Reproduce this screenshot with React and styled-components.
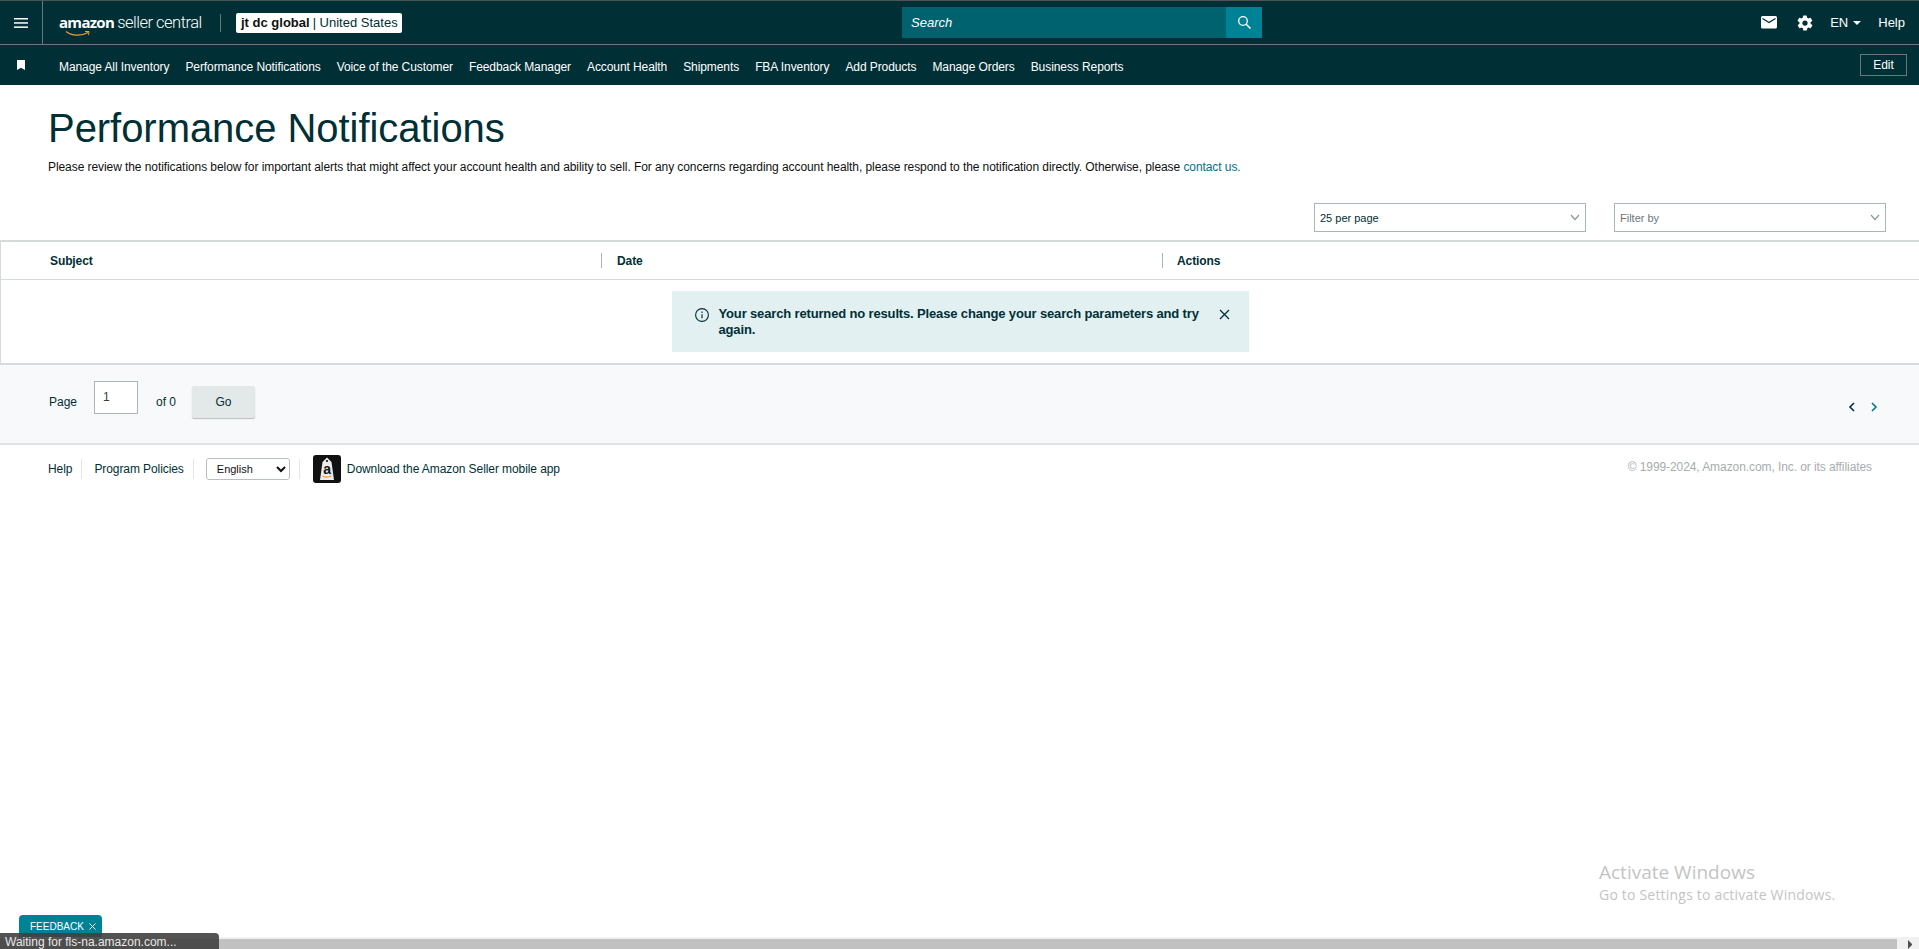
import React from 'react';
import styled, { createGlobalStyle } from 'styled-components';

const Global = createGlobalStyle`
	html, body {
		margin: 0;
		height: 100%;
		overflow: hidden;
		background: #fff;
		font-family: "Liberation Sans", Arial, sans-serif;
		color: #002f36;
	}
	* { box-sizing: border-box; }
`;

const Page = styled.div`
	position: relative;
	width: 1919px;
	height: 949px;
	overflow: hidden;
	background: #fff;
`;

const TopBar = styled.header`
	display: flex;
	align-items: center;
	height: 45px;
	background: #002f36;
	border-top: 1px solid #4b5556;
	border-bottom: 1px solid #6c7778;
	color: #fff;
`;

const MenuButton = styled.div`
	display: flex;
	align-items: center;
	justify-content: center;
	width: 43px;
	height: 100%;
	border-right: 1px solid #6c7778;
`;

const Logo = styled.div`
	position: relative;
	display: flex;
	align-items: baseline;
	margin-left: 16px;
	width: 145px;
	margin-top: -2px;
	white-space: nowrap;
	color: #fff;
`;

const LogoBold = styled.span`
	font-family: "Open Sans", sans-serif;
	font-size: 15px;
	font-weight: 700;
	letter-spacing: -0.7px;
`;

const LogoLight = styled.span`
	font-family: Roboto, sans-serif;
	font-size: 16.5px;
	font-weight: 300;
	margin-left: 3px;
	letter-spacing: -0.5px;
`;

const LogoSmile = styled.svg`
	position: absolute;
	left: 6px;
	top: 18px;
`;

const LogoDivider = styled.div`
	width: 1px;
	height: 18px;
	margin-left: 16px;
	margin-right: 15px;
	background: #6c7778;
	flex: none;
`;

const AccountPill = styled.div`
	display: flex;
	align-items: center;
	height: 20px;
	padding: 0 4px 0 5px;
	background: #fff;
	border-radius: 2px;
	color: #002f36;
	font-size: 13px;
	white-space: nowrap;
`;

const AccountName = styled.b`
	font-weight: 700;
	color: #0f1111;
	margin-right: 3px;
`;

const SearchWrap = styled.div`
	display: flex;
	position: absolute;
	left: 902px;
	top: 7px;
	width: 360px;
	height: 31px;
`;

const SearchField = styled.div`
	flex: 1;
	display: flex;
	align-items: center;
	padding-left: 9px;
	background: #00626f;
	color: #fff;
	font-size: 13px;
	font-style: italic;
`;

const SearchButton = styled.div`
	display: flex;
	align-items: center;
	justify-content: center;
	width: 36px;
	background: #008296;
`;

const TopRight = styled.div`
	display: flex;
	align-items: center;
	margin-left: auto;
	padding-right: 14px;
	font-size: 13px;
`;

const IconSlot = styled.div`
	display: flex;
	align-items: center;
	margin-right: ${(p) => p.$gap}px;
`;

const Caret = styled.span`
	display: inline-block;
	margin-left: 5px;
	margin-right: 17px;
	margin-top: 1px;
	border-left: 4px solid transparent;
	border-right: 4px solid transparent;
	border-top: 4px solid #fff;
`;

const NavBar = styled.nav`
	display: flex;
	align-items: center;
	height: 40px;
	padding-left: 17px;
	background: #002f36;
	color: #fff;
	font-size: 12px;
`;

const NavList = styled.div`
	display: flex;
	gap: 16px;
	margin-left: 34px;
	padding-top: 3px;
	letter-spacing: -0.085px;
	white-space: nowrap;
`;

const EditButton = styled.div`
	display: flex;
	align-items: center;
	justify-content: center;
	margin-left: auto;
	margin-right: 12px;
	width: 47px;
	height: 22px;
	border: 1px solid #6c7778;
	font-size: 12px;
`;

const Head = styled.section`
	padding: 20px 48px 0;
`;

const Title = styled.h1`
	margin: 0;
	font-size: 40px;
	line-height: 46px;
	font-weight: 400;
	letter-spacing: -0.05px;
	color: #002f36;
`;

const Intro = styled.p`
	margin: 8px 0 0;
	font-size: 12px;
	line-height: 16px;
	letter-spacing: -0.075px;
	color: #0f1111;
`;

const Link = styled.span`
	color: #00727f;
`;

const Controls = styled.div`
	display: flex;
	justify-content: flex-end;
	gap: 28px;
	padding: 28px 33px 8px 0;
`;

const SelectBox = styled.div`
	display: flex;
	align-items: center;
	justify-content: space-between;
	width: 272px;
	height: 29px;
	padding: 0 5px;
	border: 1px solid #a6b6b9;
	font-size: 11px;
	color: ${(p) => (p.$muted ? '#6c7778' : '#002f36')};
	background: #fff;
`;

const Table = styled.div`
	border: 1px solid #d5dbdb;
	border-top-width: 2px;
	border-bottom-width: 2px;
	border-right: none;
`;

const TableHead = styled.div`
	display: grid;
	grid-template-columns: 600px 561px 1fr;
	align-items: center;
	height: 38px;
	border-bottom: 1px solid #d5dbdb;
	font-size: 12px;
	font-weight: 700;
	letter-spacing: -0.1px;
`;

const HeadCell = styled.div`
	display: flex;
	align-items: center;
	height: 15px;
	padding-left: ${(p) => p.$pad}px;
	border-left: ${(p) => (p.$rule ? '1px solid #a6b6b9' : 'none')};
`;

const TableBody = styled.div`
	display: flex;
	justify-content: center;
	padding: 11px 0;
`;

const Notice = styled.div`
	display: flex;
	align-items: flex-start;
	width: 577px;
	height: 61px;
	padding: 15px 19px 0 24px;
	background: #e3f0f1;
	color: #002f36;
	font-size: 13px;
	font-weight: 700;
	line-height: 16px;
	letter-spacing: -0.15px;
`;

const NoticeText = styled.div`
	flex: 1;
	padding: 0 15px 0 0;
`;

const NoticeIcon = styled.svg`
	flex: none;
	margin: 1px 9px 0 -2px;
`;

const CloseIcon = styled.svg`
	flex: none;
	margin-top: 3px;
`;

const Pager = styled.div`
	display: flex;
	align-items: center;
	height: 80px;
	padding-left: 49px;
	padding-bottom: 5px;
	background: #f8f9fa;
	border-bottom: 2px solid #e0e3e6;
	font-size: 12px;
`;

const PageInput = styled.div`
	width: 44px;
	height: 33px;
	margin: -9px 18px 0 17px;
	padding: 8px 0 0 8px;
	background: #fff;
	border: 1px solid #a6b6b9;
	color: #3b3b3b;
`;

const GoButton = styled.div`
	display: flex;
	align-items: center;
	justify-content: center;
	width: 63px;
	height: 32px;
	margin-left: 16px;
	background: #e3e9e9;
	border-radius: 2px;
	box-shadow: 0 1px 1px rgba(0, 0, 0, 0.25);
`;

const PagerArrows = styled.div`
	display: flex;
	align-items: center;
	gap: 14px;
	margin-left: auto;
	margin-right: 41px;
	margin-top: 10px;
`;

const Footer = styled.footer`
	display: flex;
	align-items: center;
	padding: 10px 47px 0 48px;
	font-size: 12px;
	letter-spacing: -0.08px;
	color: #002f36;
`;

const FooterItem = styled.div`
	display: flex;
	align-items: center;
	height: 20px;
	padding-right: ${(p) => p.$right}px;
	margin-right: ${(p) => p.$after}px;
	border-right: 1px solid #e3e6e6;
`;

const LangSelect = styled.select`
	width: 84px;
	height: 22px;
	padding-left: 6px;
	background: #fff;
	border: 1px solid #b8bfbf;
	border-radius: 3px;
	font-family: "Liberation Sans", sans-serif;
	font-size: 11px;
	color: #0f1111;
`;

const AppIcon = styled.svg`
	margin-right: 6px;
	margin-left: 1px;
`;

const Copyright = styled.div`
	margin-left: auto;
	margin-top: -4px;
	font-size: 12px;
	color: #a7adad;
`;

const Watermark = styled.div`
	position: absolute;
	left: 1599px;
	top: 860px;
	font-family: "Open Sans", sans-serif;
	color: #c4c4c4;
`;

const WatermarkTitle = styled.div`
	font-size: 19px;
	line-height: 24px;
`;

const WatermarkLine = styled.div`
	font-size: 14px;
	line-height: 21px;
	letter-spacing: 0.2px;
`;

const FeedbackTab = styled.div`
	position: absolute;
	left: 19px;
	top: 915px;
	display: flex;
	align-items: center;
	gap: 5px;
	width: 83px;
	height: 22px;
	padding: 1px 0 0 11px;
	background: #008296;
	border-radius: 4px 4px 0 0;
	color: #fff;
	font-size: 10px;
`;

const ScrollBar = styled.div`
	position: absolute;
	left: 0;
	right: 0;
	top: 937px;
	height: 12px;
	display: flex;
	background: #f1f1f1;
`;

const ScrollThumb = styled.div`
	width: 1897px;
	margin-top: 2px;
	background: #c1c1c1;
`;

const ScrollArrow = styled.div`
	margin: 3px 0 0 11px;
	border-top: 4px solid transparent;
	border-bottom: 4px solid transparent;
	border-left: 4px solid #505050;
`;

const StatusBubble = styled.div`
	position: absolute;
	left: 0;
	top: 933px;
	width: 219px;
	height: 16px;
	padding: 2px 0 0 5px;
	background: rgba(64, 64, 64, 0.9);
	border-top-right-radius: 4px;
	color: #e8e8e8;
	font-family: "Liberation Sans", sans-serif;
	font-size: 12px;
	line-height: 14px;
	white-space: nowrap;
`;

const navItems = [
	'Manage All Inventory',
	'Performance Notifications',
	'Voice of the Customer',
	'Feedback Manager',
	'Account Health',
	'Shipments',
	'FBA Inventory',
	'Add Products',
	'Manage Orders',
	'Business Reports',
];

const Chevron = () => (
	<svg width="10" height="7" viewBox="0 0 10 7" fill="none">
		<path d="M1 1 5 5.5 9 1" stroke="#8a9899" strokeWidth="1.2" />
	</svg>
);

export default function App() {
	return (
		<Page>
			<Global />
			<TopBar>
				<MenuButton>
					<svg width="14" height="12" viewBox="0 0 14 12" fill="#fff">
						<rect y="1" width="14" height="1.5" />
						<rect y="5.2" width="14" height="1.5" />
						<rect y="9.4" width="14" height="1.5" />
					</svg>
				</MenuButton>
				<Logo>
					<LogoBold>amazon</LogoBold>
					<LogoLight>seller central</LogoLight>
					<LogoSmile width="26" height="8" viewBox="0 0 26 8" fill="none">
						<path d="M1 1.5C7 6 16 6.5 23 2.5" stroke="#f79c34" strokeWidth="1.3" />
						<path d="M20 1.5 24 1.5 23.5 5" stroke="#f79c34" strokeWidth="1" />
					</LogoSmile>
				</Logo>
				<LogoDivider />
				<AccountPill>
					<AccountName>jt dc global</AccountName>
					<span>|&nbsp;United States</span>
				</AccountPill>
				<SearchWrap>
					<SearchField>Search</SearchField>
					<SearchButton>
						<svg width="15" height="15" viewBox="0 0 15 15" fill="none" stroke="#fff">
							<circle cx="6" cy="6" r="4.3" strokeWidth="1.3" />
							<path d="M9.2 9.2 13.5 13.5" strokeWidth="1.6" />
						</svg>
					</SearchButton>
				</SearchWrap>
				<TopRight>
					<IconSlot $gap={19}>
						<svg width="16" height="13" viewBox="0 0 16 13">
							<rect width="16" height="12.5" rx="1.5" fill="#fff" />
							<path d="M1.5 2.5 8 6.5 14.5 2.5" fill="none" stroke="#002f36" strokeWidth="1.4" />
						</svg>
					</IconSlot>
					<IconSlot $gap={16}>
						<svg width="18" height="18" viewBox="0 0 24 24" fill="#fff">
							<path d="M19.4 13a7.6 7.6 0 0 0 0-2l2.1-1.6a.5.5 0 0 0 .1-.6l-2-3.5a.5.5 0 0 0-.6-.2l-2.5 1a7.3 7.3 0 0 0-1.7-1l-.4-2.6a.5.5 0 0 0-.5-.4h-4a.5.5 0 0 0-.5.4l-.4 2.6a7.7 7.7 0 0 0-1.7 1l-2.5-1a.5.5 0 0 0-.6.2l-2 3.5a.5.5 0 0 0 .1.6L4.6 11a7.6 7.6 0 0 0 0 2l-2.1 1.6a.5.5 0 0 0-.1.6l2 3.5c.1.2.4.3.6.2l2.5-1c.5.4 1.1.7 1.7 1l.4 2.6c0 .2.3.4.5.4h4c.2 0 .5-.2.5-.4l.4-2.6c.6-.3 1.2-.6 1.7-1l2.5 1c.2.1.5 0 .6-.2l2-3.5a.5.5 0 0 0-.1-.6ZM12 15.5a3.5 3.5 0 1 1 0-7 3.5 3.5 0 0 1 0 7Z" />
						</svg>
					</IconSlot>
					<span>EN</span>
					<Caret />
					<span>Help</span>
				</TopRight>
			</TopBar>
			<NavBar>
				<svg width="8" height="10" viewBox="0 0 8 10" fill="#fff">
					<path d="M0 0h8v10L4 7.8 0 10Z" />
				</svg>
				<NavList>
					{navItems.map((item) => (
						<span key={item}>{item}</span>
					))}
				</NavList>
				<EditButton>Edit</EditButton>
			</NavBar>
			<Head>
				<Title>Performance Notifications</Title>
				<Intro>
					Please review the notifications below for important alerts that might affect your account health and ability to sell. For any concerns regarding account health, please respond to the notification directly. Otherwise, please <Link>contact us.</Link>
				</Intro>
			</Head>
			<Controls>
				<SelectBox>
					<span>25 per page</span>
					<Chevron />
				</SelectBox>
				<SelectBox $muted>
					<span>Filter by</span>
					<Chevron />
				</SelectBox>
			</Controls>
			<Table>
				<TableHead>
					<HeadCell $pad={49}>Subject</HeadCell>
					<HeadCell $rule $pad={15}>Date</HeadCell>
					<HeadCell $rule $pad={14}>Actions</HeadCell>
				</TableHead>
				<TableBody>
					<Notice>
						<NoticeIcon width="16" height="16" viewBox="0 0 16 16" fill="none" stroke="#002f36">
							<circle cx="8" cy="8" r="6.4" strokeWidth="1.1" />
							<path d="M8 7.2v4" strokeWidth="1.2" />
							<path d="M8 4.6v1.3" strokeWidth="1.2" />
						</NoticeIcon>
						<NoticeText>Your search returned no results. Please change your search parameters and try again.</NoticeText>
						<CloseIcon width="11" height="11" viewBox="0 0 11 11" fill="none" stroke="#002f36" strokeWidth="1.3">
							<path d="M1 1 10 10M10 1 1 10" />
						</CloseIcon>
					</Notice>
				</TableBody>
			</Table>
			<Pager>
				<span>Page</span>
				<PageInput>1</PageInput>
				<span>of 0</span>
				<GoButton>Go</GoButton>
				<PagerArrows>
					<svg width="8" height="10" viewBox="0 0 8 10" fill="none" stroke="#002f36" strokeWidth="1.6">
						<path d="M6 1 2 5 6 9" />
					</svg>
					<svg width="8" height="10" viewBox="0 0 8 10" fill="none" stroke="#00788a" strokeWidth="1.6">
						<path d="M2 1 6 5 2 9" />
					</svg>
				</PagerArrows>
			</Pager>
			<Footer>
				<FooterItem $right={9} $after={12}>Help</FooterItem>
				<FooterItem $right={9} $after={12}>Program Policies</FooterItem>
				<FooterItem $right={9} $after={12}>
					<LangSelect defaultValue="English">
						<option>English</option>
					</LangSelect>
				</FooterItem>
				<AppIcon width="28" height="28" viewBox="0 0 28 28">
					<rect width="28" height="28" rx="3" fill="#111" />
					<path d="M9.5 7 14 2.5 18.5 7 21 25 7 25Z" fill="#ececec" />
					<circle cx="14" cy="6" r="1.1" fill="#111" />
					<text x="14" y="18.5" textAnchor="middle" fontFamily="Liberation Sans, sans-serif" fontSize="14" fontWeight="700" fill="#111">a</text>
					<path d="M9.5 21C12 22.6 16 22.6 18.5 20.6" fill="none" stroke="#f79c34" strokeWidth="1.1" />
				</AppIcon>
				<span>Download the Amazon Seller mobile app</span>
				<Copyright>© 1999-2024, Amazon.com, Inc. or its affiliates</Copyright>
			</Footer>
			<Watermark>
				<WatermarkTitle>Activate Windows</WatermarkTitle>
				<WatermarkLine>Go to Settings to activate Windows.</WatermarkLine>
			</Watermark>
			<ScrollBar>
				<ScrollThumb />
				<ScrollArrow />
			</ScrollBar>
			<FeedbackTab>
				<span>FEEDBACK</span>
				<svg width="7" height="7" viewBox="0 0 7 7" fill="none" stroke="#fff" strokeWidth="1">
					<path d="M.5.5l6 6M6.5.5l-6 6" />
				</svg>
			</FeedbackTab>
			<StatusBubble>Waiting for fls-na.amazon.com...</StatusBubble>
		</Page>
	);
}
